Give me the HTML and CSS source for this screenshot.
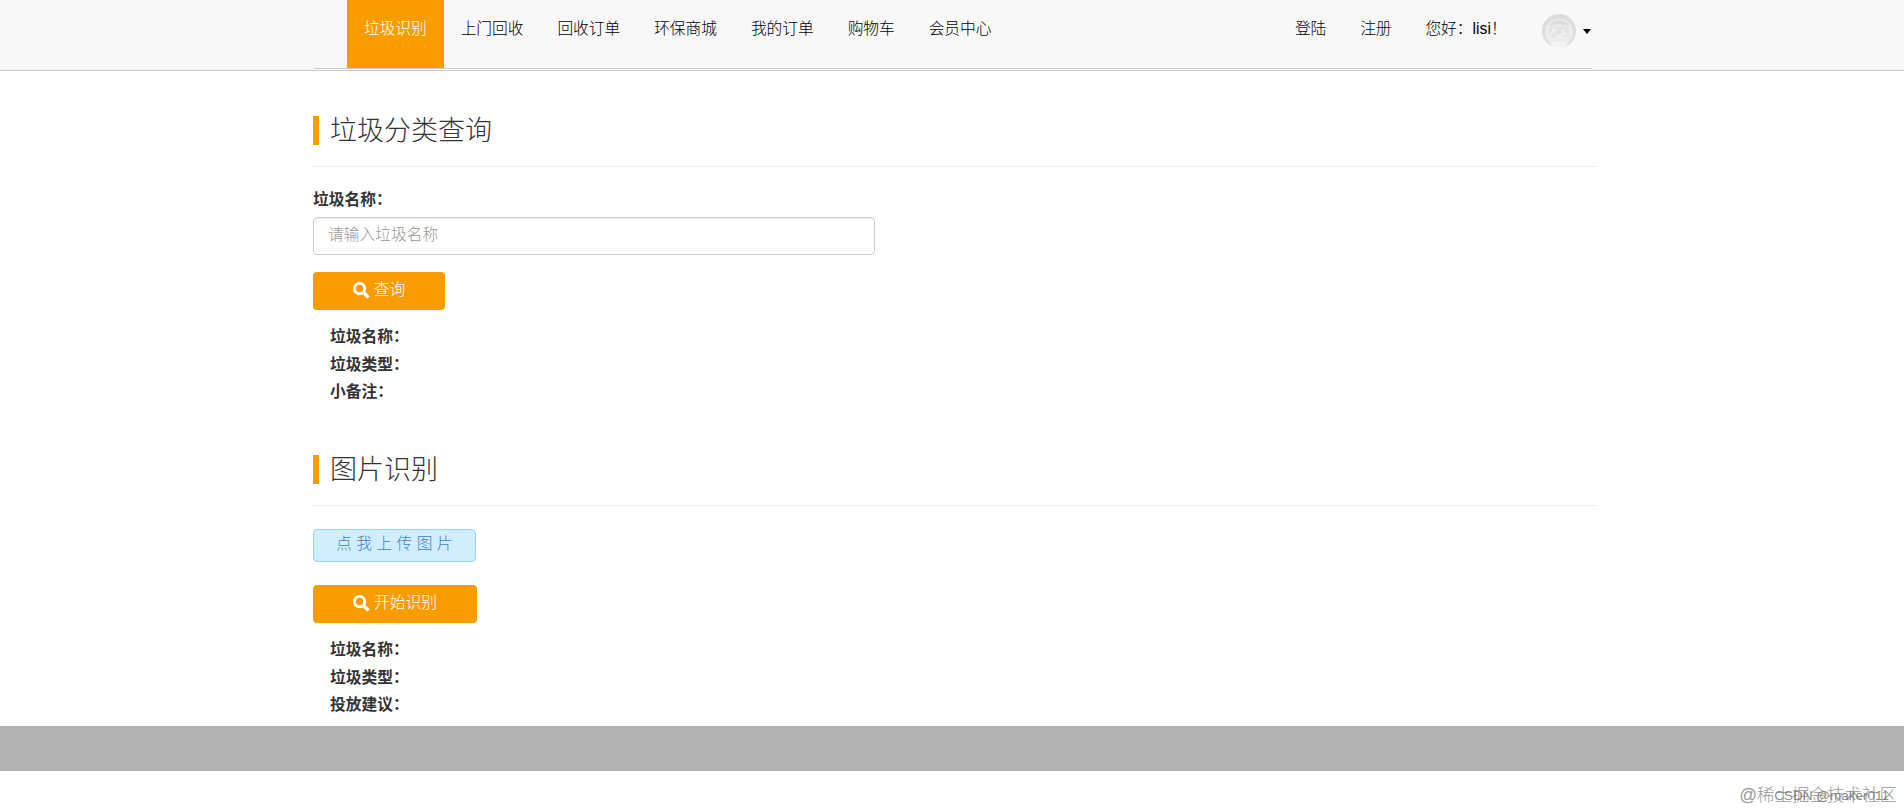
FILE: index.html
```html
<!DOCTYPE html>
<html lang="zh-CN">
<head>
<meta charset="utf-8">
<title>垃圾分类查询</title>
<link rel="stylesheet" href="styles.css">
</head>
<body>
<header class="navbar">
  <div class="navbar-inner">
    <nav class="menu">
      <a class="active">垃圾识别</a><a>上门回收</a><a>回收订单</a><a>环保商城</a><a>我的订单</a><a>购物车</a><a>会员中心</a>
    </nav>
    <div class="menu user">
      <a>登陆</a><a>注册</a><a>您好：lisi！</a>
      <svg class="avatar" width="34" height="34" viewBox="0 0 34 34">
        <circle cx="17" cy="17" r="17" fill="#dcdcdc"/>
        <circle cx="17" cy="18.5" r="14" fill="#ececec"/>
        <path d="M6 12Q17 0 28 12Q17 9 6 12Z" fill="#dcdcdc"/>
        <rect x="7" y="12" width="20" height="11" rx="4" fill="#e5e5e5"/>
        <path d="M9 20l3-4h2M21 16v4h3M14 22h6" fill="none" stroke="#f6f6f6" stroke-width="1.5"/>
        <path d="M8 30Q17 24 26 30L22 34H12Z" fill="#f4f4f4"/>
      </svg>
      <span class="caret"></span>
    </div>
  </div>
</header>
<main class="container">
  <section class="query">
    <h2>垃圾分类查询</h2>
    <label class="field-label" for="name">垃圾名称：</label>
    <input class="field" id="name" type="text" placeholder="请输入垃圾名称">
    <button class="btn"><svg class="search" viewBox="0 0 17 17"><circle cx="6.6" cy="6.6" r="5.2"/><path d="M10.5 10.5L15.5 15.5"/></svg>查询</button>
    <ul class="result"><li>垃圾名称：</li><li>垃圾类型：</li><li>小备注：</li></ul>
  </section>
  <section class="recognize">
    <h2>图片识别</h2>
    <button class="upload">点我上传图片</button>
    <button class="btn wide"><svg class="search" viewBox="0 0 17 17"><circle cx="6.6" cy="6.6" r="5.2"/><path d="M10.5 10.5L15.5 15.5"/></svg>开始识别</button>
    <ul class="result"><li>垃圾名称：</li><li>垃圾类型：</li><li>投放建议：</li></ul>
  </section>
</main>
<footer class="footer"></footer>
<div class="mark mark-large">@稀土掘金技术社区</div>
<div class="mark mark-small">CSDN @maker011</div>
</body>
</html>
```
FILE: styles.css
```css
* { box-sizing: border-box; }
body {
  margin: 0;
  height: 812px;
  overflow: hidden;
  position: relative;
  background: #fff;
  color: #333;
  font: 300 15.75px/22.5px "Liberation Sans", "Noto Sans CJK SC", sans-serif;
}
.navbar { height: 71px; background: #f8f8f8; border-bottom: 1px solid #c8c8c8; }
.navbar-inner {
  display: flex;
  justify-content: space-between;
  width: 1278px;
  height: 69px;
  margin-left: 314px;
  padding-left: 33px;
  border-bottom: 1px solid #c8c8c8;
  box-shadow: 0 1px #fff;
}
.menu { display: flex; color: #000; }
.menu a { height: 68px; padding: 18px 16.875px 0; white-space: nowrap; }
.menu .active { background: #f89c00; color: #fff; }
.user { width: 314px; }
.avatar { flex: none; margin: 14px 0 0 18px; }
.caret {
  flex: none;
  margin: 29px 0 0 7px;
  width: 8px;
  height: 5px;
  border: 4.5px solid transparent;
  border-top: 5px solid #000;
  border-bottom: 0;
}
.container { width: 1284px; margin-left: 312px; padding-left: 1px; }
.query { height: 339px; padding-top: 36px; }
.recognize { height: 316px; padding-top: 36px; }
h2 {
  display: flex;
  align-items: center;
  gap: 11px;
  height: 60px;
  margin: 0 0 0 -1px;
  padding: 0 0 12px 1px;
  border-bottom: 1px solid #eee;
  font-size: 27px;
  font-weight: 300;
  line-height: 40px;
}
h2::before { content: ""; width: 6px; height: 29px; background: #f59d0b; }
.field-label { display: block; height: 23px; margin: 22px 0 5px; font-weight: 600; }
.field {
  display: block;
  width: 562px;
  height: 38px;
  padding: 0 14px 2px;
  border: 1px solid #ccc;
  border-radius: 4px;
  box-shadow: inset 0 1px 1px rgba(0, 0, 0, .075);
  font: inherit;
}
.field::placeholder { color: #999; }
button { display: flex; align-items: center; justify-content: center; font: inherit; }
.btn {
  width: 132px;
  height: 38px;
  margin: 17px 0 16px;
  padding: 0 0 2px;
  border: 0;
  border-radius: 4px;
  background: #f89c00;
  color: #fff;
}
.btn.wide { width: 164px; margin: 23px 0 16px; }
.search { width: 17px; height: 17px; margin-right: 4px; fill: none; stroke: #fff; stroke-width: 2.8; }
.search path { stroke-width: 3.4; }
.upload {
  width: 163px;
  height: 33px;
  margin-top: 23px;
  padding: 0 0 2px 4px;
  border: 1px solid #99d3f5;
  border-radius: 4px;
  background: #d0eeff;
  color: #3f83bd;
  letter-spacing: 4.4px;
}
.result { margin: 0; padding: 0 0 0 17px; list-style: none; font-weight: 600; }
.result li { height: 27.5px; }
.footer { height: 45px; background: #b2b2b2; }
/* Overlapping watermarks in the page corner */
.mark { position: absolute; white-space: nowrap; }
.mark-large { right: 7px; bottom: 5px; font-size: 17.5px; line-height: 24px; color: #999; }
.mark-small { right: 15px; bottom: 8px; font-size: 13.5px; line-height: 16px; color: rgba(110, 110, 110, .8); }
```
